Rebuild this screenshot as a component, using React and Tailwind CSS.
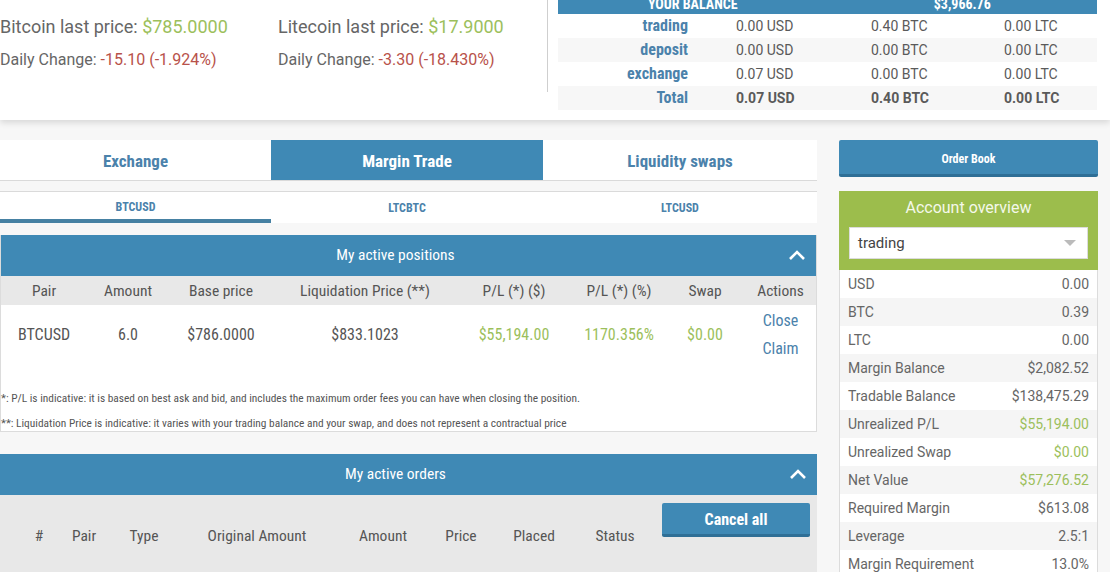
import React from "react";

const narrow = { fontFamily: '"Liberation Sans Narrow", "Roboto Condensed", "DejaVu Sans Condensed", sans-serif' };

function Chevron() {
  return (
    <svg width="18" height="12" viewBox="0 0 18 12" fill="none">
      <polyline points="2,10 9,3 16,10" stroke="white" strokeWidth="2.6" />
    </svg>
  );
}

export default function App() {
  const balances = [
    ["trading", "0.00 USD", "0.40 BTC", "0.00 LTC"],
    ["deposit", "0.00 USD", "0.00 BTC", "0.00 LTC"],
    ["exchange", "0.07 USD", "0.00 BTC", "0.00 LTC"],
    ["Total", "0.07 USD", "0.40 BTC", "0.00 LTC"],
  ];

  const overview = [
    ["USD", "0.00"],
    ["BTC", "0.39"],
    ["LTC", "0.00"],
    ["Margin Balance", "$2,082.52"],
    ["Tradable Balance", "$138,475.29"],
    ["Unrealized P/L", "$55,194.00", true],
    ["Unrealized Swap", "$0.00", true],
    ["Net Value", "$57,276.52", true],
    ["Required Margin", "$613.08"],
    ["Leverage", "2.5:1"],
    ["Margin Requirement", "13.0%"],
  ];

  const posHeads = ["Pair", "Amount", "Base price", "Liquidation Price (**)", "P/L (*) ($)", "P/L (*) (%)", "Swap", "Actions"];
  const orderHeads = ["#", "Pair", "Type", "Original Amount", "Amount", "Price", "Placed", "Status"];

  return (
    <div className="w-[1110px] h-[572px] overflow-hidden bg-[#f7f7f7]" style={{ fontFamily: "Roboto, sans-serif" }}>
      {/* top header */}
      <header className="h-[120px] bg-white flex shadow-[0_3px_6px_rgba(0,0,0,0.12)] relative z-10 overflow-hidden">
        <div className="w-[548px] h-[92px] border-r border-[#cfcfcf] flex">
          <div className="w-[278px] pt-[14px]">
            <div className="text-[18px] text-[#666] leading-[26px]">
              Bitcoin last price: <span className="text-[#9cbf5c]">$785.0000</span>
            </div>
            <div className="text-[16px] text-[#666] leading-[24px] mt-[8px]">
              Daily Change: <span className="text-[#b8524a]">-15.10 (-1.924%)</span>
            </div>
          </div>
          <div className="pt-[14px]">
            <div className="text-[18px] text-[#666] leading-[26px]">
              Litecoin last price: <span className="text-[#9cbf5c]">$17.9000</span>
            </div>
            <div className="text-[16px] text-[#666] leading-[24px] mt-[8px]">
              Daily Change: <span className="text-[#b8524a]">-3.30 (-18.430%)</span>
            </div>
          </div>
        </div>
        <div className="ml-[10px] w-[539px] -mt-[6px]">
          <div className="h-[20px] bg-[#3f89b5] text-white font-bold text-[14px] flex items-center" style={narrow}>
            <div className="flex-1 text-center">YOUR BALANCE</div>
            <div className="flex-1 text-center">$3,966.76</div>
          </div>
          {balances.map((r, i) => (
            <div key={r[0]} className={`h-[24px] flex items-center text-[14px] text-[#5a5a5a] ${i % 2 ? "bg-[#f7f7f7]" : "bg-white"} ${i === 3 ? "font-bold" : ""}`}>
              <div className="w-[130px] text-right text-[#4b82ab] font-bold text-[16px]" style={narrow}>{r[0]}</div>
              <div className="w-[135px] pl-[48px]">{r[1]}</div>
              <div className="w-[133px] pl-[48px]">{r[2]}</div>
              <div className="pl-[48px]">{r[3]}</div>
            </div>
          ))}
        </div>
      </header>

      <div className="flex pt-[20px]">
        {/* main column */}
        <main className="w-[817px]">
          <div className="flex bg-white h-[41px] border-b border-[#dadada] font-bold text-[17px] pt-[3px]" style={narrow}>
            <div className="w-[271px] flex items-center justify-center text-[#4b82ab] -mt-[3px] pt-[3px]">Exchange</div>
            <div className="w-[272px] flex items-center justify-center bg-[#3f89b5] text-white -mt-[3px] pt-[3px]">Margin Trade</div>
            <div className="flex-1 flex items-center justify-center text-[#4b82ab] -mt-[3px] pt-[3px]">Liquidity swaps</div>
          </div>
          <div className="mt-[10px] flex bg-white h-[32px] border-t border-[#dadada] font-bold text-[12px] text-[#4b82ab]" style={narrow}>
            <div className="w-[271px] flex items-center justify-center border-b-4 border-[#4681a3] pt-[3px]">BTCUSD</div>
            <div className="w-[272px] flex items-center justify-center">LTCBTC</div>
            <div className="flex-1 flex items-center justify-center">LTCUSD</div>
          </div>

          {/* positions */}
          <section className="mt-[12px] bg-white border border-[#dcdcdc] border-t-0 h-[197px]" style={narrow}>
            <div className="h-[41px] bg-[#3f89b5] text-white text-[15.5px] flex items-center justify-center relative pr-[26px] pt-[1px]">
              My active positions
              <span className="absolute right-[10px] top-[14px]"><Chevron /></span>
            </div>
            <div className="grid grid-cols-[86px_82px_104px_184px_114px_96px_76px_75px] h-[29px] items-center bg-[#e8e8e8] text-[15.5px] text-[#555] text-center pt-[2px]">
              {posHeads.map((h) => <div key={h}>{h}</div>)}
            </div>
            <div className="grid grid-cols-[86px_82px_104px_184px_114px_96px_76px_75px] h-[58px] items-center text-[16px] text-[#555] text-center pt-[2px]">
              <div>BTCUSD</div>
              <div>6.0</div>
              <div>$786.0000</div>
              <div>$833.1023</div>
              <div className="text-[#9cbf5c]">$55,194.00</div>
              <div className="text-[#9cbf5c]">1170.356%</div>
              <div className="text-[#9cbf5c]">$0.00</div>
              <div className="text-[#4b82ab] leading-[28px]">
                <div>Close</div>
                <div>Claim</div>
              </div>
            </div>
            <div className="text-[11.4px] text-[#555] mt-[28px] leading-[14px] whitespace-nowrap">
              *: P/L is indicative: it is based on best ask and bid, and includes the maximum order fees you can have when closing the position.
            </div>
            <div className="text-[11.4px] text-[#555] mt-[11px] leading-[14px] whitespace-nowrap">
              **: Liquidation Price is indicative: it varies with your trading balance and your swap, and does not represent a contractual price
            </div>
          </section>

          {/* orders */}
          <section className="mt-[22px]" style={narrow}>
            <div className="h-[41px] bg-[#3f89b5] text-white text-[15.5px] flex items-center justify-center relative pr-[26px] pt-[1px]">
              My active orders
              <span className="absolute right-[10px] top-[14px]"><Chevron /></span>
            </div>
            <div className="h-[80px] bg-[#e8e8e8] flex items-start pl-[16px]">
              <div className="grid grid-cols-[46px_44px_76px_150px_102px_54px_92px_70px] pt-[31px] text-[15.5px] text-[#555] text-center leading-[20px]">
                {orderHeads.map((h) => <div key={h}>{h}</div>)}
              </div>
              <button className="ml-[12px] mt-[8px] w-[148px] h-[34px] bg-[#3f89b5] border-b-[3px] border-[#2f6f96] text-white font-bold text-[16px] rounded-[2px] pt-[2px]">
                Cancel all
              </button>
            </div>
          </section>
        </main>

        {/* right column */}
        <aside className="ml-[22px] w-[259px]">
          <button className="w-full h-[37px] bg-[#3f89b5] border-b-[3px] border-[#2f6f96] text-white font-bold text-[12px] rounded-[2px] pt-[3px]" style={narrow}>
            Order Book
          </button>
          <div className="mt-[14px] bg-[#9cbd4c] pb-[11px]">
            <div className="h-[34px] flex items-center justify-center text-[16px] text-[#f4f8ea]">Account overview</div>
            <div className="mx-[10px] mt-[2px] h-[32px] bg-white border border-[#dcdcdc] flex items-center justify-between px-[8px] text-[15px] text-[#444]">
              <span>trading</span>
              <span className="w-0 h-0 border-l-[6px] border-r-[6px] border-t-[6px] border-l-transparent border-r-transparent border-t-[#bbb] mr-[3px]"></span>
            </div>
          </div>
          <div className="border-x border-[#dcdcdc]">
            {overview.map(([k, v, g], i) => (
              <div key={k} className={`h-[28px] flex items-center justify-between px-[8px] text-[14px] text-[#666] ${i % 2 ? "bg-[#f5f5f5]" : "bg-white"}`}>
                <span>{k}</span>
                <span className={g ? "text-[#9cbf5c]" : ""}>{v}</span>
              </div>
            ))}
          </div>
        </aside>
      </div>
    </div>
  );
}
